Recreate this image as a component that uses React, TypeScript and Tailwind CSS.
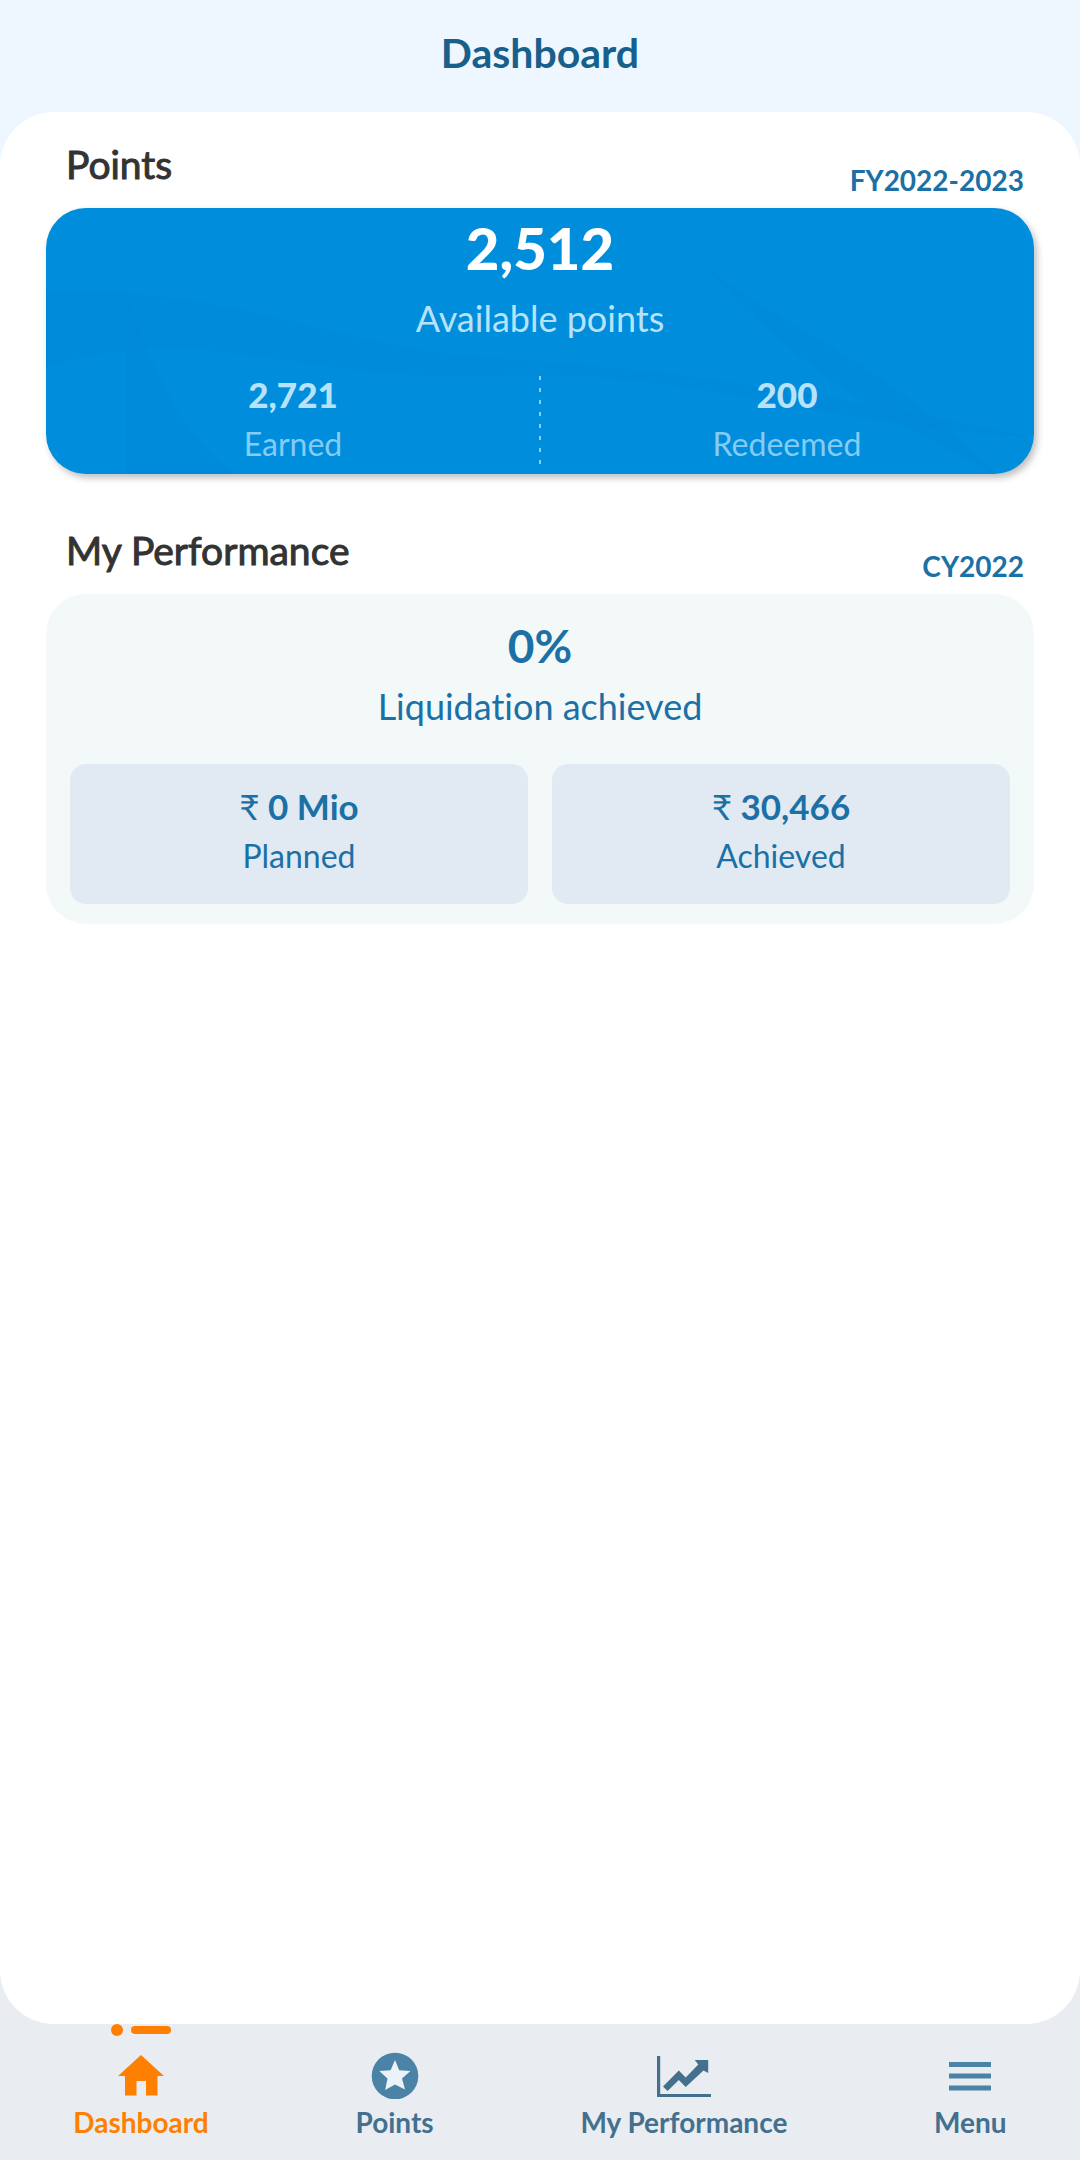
import type { ReactNode } from "react";

const navItems = [
  { label: "Dashboard", icon: <HomeIcon />, active: true },
  { label: "Points", icon: <StarIcon />, active: false },
  { label: "My Performance", icon: <ChartIcon />, active: false },
  { label: "Menu", icon: <MenuIcon />, active: false },
];

function HomeIcon() {
  return (
    <svg className="h-12 w-12" viewBox="0 0 48 48" fill="currentColor" aria-hidden="true">
      <path d="M24 4 47 25H40.500V44.500H29V30H19.500V44.500H8V25H1Z" />
    </svg>
  );
}

function StarIcon() {
  return (
    <svg className="h-12 w-12" viewBox="0 0 48 48" aria-hidden="true">
      <circle cx="24" cy="25" r="23.3" fill="#4a83a6" />
      <path
        d="M24 9 28.2 19.2 39.5 20 31 27.6 34 38.6 24 33.4 14.2 38.9 16.5 27.6 8.3 20.1 19.6 19.2Z"
        fill="#edf2f6"
      />
    </svg>
  );
}

function ChartIcon() {
  return (
    <svg className="h-12 w-14" viewBox="0 0 56 48" fill="currentColor" aria-hidden="true">
      <path d="M1 5H4.200V43H55V46H1Z" />
      <path d="M7 35.500 22.800 19.500 29.700 26.500 42.300 13.500 38.700 9H52.200V22L47.500 19.500 29.700 36 22.800 29 11.600 40Z" />
    </svg>
  );
}

function MenuIcon() {
  return (
    <svg className="h-12 w-12" viewBox="0 0 48 48" fill="#4a83a6" aria-hidden="true">
      <path d="M3 11H45V16H3ZM3 22.500H45V27.500H3ZM3 34.500H45V39.500H3Z" />
    </svg>
  );
}

function SectionHeading({ title, period }: { title: string; period: string }) {
  return (
    <div className="mb-[10px] flex h-[58px] justify-between pr-[10px] pl-5">
      <h2 className="text-[39px] leading-12 text-[#333333] [-webkit-text-stroke:1px_#333333]">{title}</h2>
      <span className="self-end text-[28px] leading-9 font-bold text-[#1b70a6]">{period}</span>
    </div>
  );
}

function Stat({ value, label }: { value: ReactNode; label: string }) {
  return (
    <>
      <div className="text-[35px] leading-11 font-bold">{value}</div>
      <div className="mt-2 text-[32px] leading-10">{label}</div>
    </>
  );
}

export default function App() {
  return (
    <div className="flex min-h-screen flex-col bg-[linear-gradient(#eef6ff_50%,#e9edf1_50%)] font-[Lato,'Open_Sans',sans-serif] [font-variant-ligatures:none]">
      <header className="h-28 pt-7 text-center">
        <h1 className="text-[41px] leading-[50px] font-bold text-[#17608c]">Dashboard</h1>
      </header>

      <main className="flex flex-1 flex-col gap-[52px] rounded-[54px] bg-white px-[46px] pt-7">
        <section>
          <SectionHeading title="Points" period="FY2022-2023" />
          <div className="relative overflow-hidden rounded-[40px] bg-[#008edc] pt-2 pb-[10px] text-center shadow-[3px_4px_7px_rgba(0,0,0,0.25)]">
            {/* faint folds in the background */}
            <svg
              className="absolute inset-0 h-full w-full"
              viewBox="0 0 988 266"
              preserveAspectRatio="none"
              fill="#0082d3"
              aria-hidden="true"
            >
              <path d="M0 82C200 80 290 140 450 150S760 180 988 230C760 215 640 160 450 168S150 110 0 160Z" opacity="0.15" />
              <path d="M80 80C110 180 150 240 190 266H80Z" opacity="0.15" />
              <path d="M660 60C760 130 860 170 950 266C840 210 760 170 660 60Z" opacity="0.25" />
            </svg>
            <div className="relative">
              <div className="text-[58px] leading-16 font-black text-white">2,512</div>
              <div className="mt-4 text-[36px] leading-11 text-[#b8e2fa]">Available points</div>
              <div className="mt-8 grid grid-cols-2">
                <div className="text-[#86cbf3]">
                  <Stat value={<span className="font-black text-[#b8e2fa]">2,721</span>} label="Earned" />
                </div>
                <div className="text-[#86cbf3]">
                  <Stat value={<span className="font-black text-[#b8e2fa]">200</span>} label="Redeemed" />
                </div>
              </div>
              <div className="absolute bottom-0 left-1/2 h-[88px] w-[2px] -translate-x-1/2 bg-[repeating-linear-gradient(#8accf2_0_4px,transparent_4px_12px)]"></div>
            </div>
          </div>
        </section>

        <section>
          <SectionHeading title="My Performance" period="CY2022" />
          <div className="rounded-[40px] bg-[#f3f8f9] px-6 pt-6 pb-5 text-center text-[#1b70a6]">
            <div className="text-[46px] leading-14 font-bold">0%</div>
            <div className="mt-[10px] text-[36px] leading-11">Liquidation achieved</div>
            <div className="mt-9 grid grid-cols-2 gap-6">
              <div className="rounded-2xl bg-[#e1e9f2] pt-5 pb-7">
                <Stat value={<><span className="font-normal">₹</span> 0 Mio</>} label="Planned" />
              </div>
              <div className="rounded-2xl bg-[#e1e9f2] pt-5 pb-7">
                <Stat value={<><span className="font-normal">₹</span> 30,466</>} label="Achieved" />
              </div>
            </div>
          </div>
        </section>
      </main>

      <nav className="flex justify-around pb-5">
        {navItems.map((item) => (
          <a
            key={item.label}
            href="#"
            aria-current={item.active ? "page" : undefined}
            className={
              item.active
                ? "flex flex-col items-center text-[#ff8000]"
                : "flex flex-col items-center text-[#43708f]"
            }
          >
            <div className="flex h-3 items-center gap-2">
              {item.active && (
                <>
                  <span className="size-3 rounded-full bg-[#ff8000]"></span>
                  <span className="h-2 w-10 rounded-full bg-[#ff8000]"></span>
                </>
              )}
            </div>
            <div className="mt-[15px]">{item.icon}</div>
            <span className="mt-[5px] text-[28px] leading-9 font-bold">{item.label}</span>
          </a>
        ))}
      </nav>
    </div>
  );
}
